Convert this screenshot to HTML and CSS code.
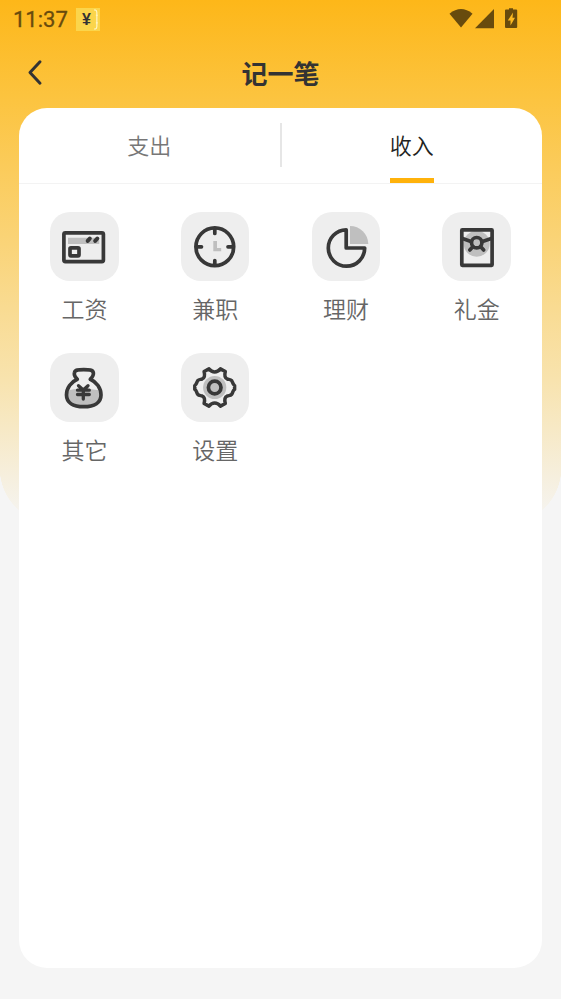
FILE: index.html
```html
<!DOCTYPE html>
<html lang="zh-CN">
<head>
<meta charset="utf-8">
<title>记一笔</title>
<link rel="stylesheet" href="styles.css">
</head>
<body>
<div class="screen">
  <div class="status">
    <span class="time">11:37</span>
    <span class="badge"><span class="yen">¥</span><svg width="6" height="23" viewBox="0 0 6 23"><path d="M0 1.500H1.500Q3 2 3 4V19Q3 21 1.500 21.500H0M2 7H4M2 15H4" fill="none" stroke="#fff6c8" stroke-width="1.200"/></svg></span>
    <svg class="signals" width="76" height="24" viewBox="0 1 76 24" fill="#684b0d">
      <path d="M1 9Q12.500 -1 24 9L12.500 24Z" transform="translate(-.5 -.7) scale(1 .93)"/>
      <path d="M45 3V22.300H26Z"/>
      <path fill-rule="evenodd" d="M60 2.300h4V3.600h3.200q1 0 1 1V21q0 1-1 1H57q-1 0-1-1V4.600q0-1 1-1h3ZM64 6.500L58.800 14.500H61.500V19.500L66 11.700H63.500Z"/>
    </svg>
  </div>
  <header class="header">
    <svg class="back" width="16" height="28" viewBox="0 0 16 28"><path d="M13 2.800L3 13.500L13 24.200" fill="none" stroke="#333" stroke-width="3" stroke-linecap="round" stroke-linejoin="round"/></svg>
    <h1>记一笔</h1>
  </header>
  <main class="card">
    <nav class="tabs">
      <div class="tab"><span>支出</span></div>
      <div class="divider"></div>
      <div class="tab active"><span>收入</span></div>
    </nav>
    <div class="grid">
      <div class="item">
        <svg class="tile" viewBox="0 0 68.5 69">
          <path class="shade" d="M18 25.700H49.300V32H18Z"/>
          <rect x="13.900" y="20.800" width="39.500" height="28.800" rx="1.500"/>
          <rect x="20" y="35.800" width="9" height="8" rx="1"/>
          <path d="M37.700 28.900L39.800 26.500M45.200 28.900L47.300 26.500" stroke-width="4"/>
        </svg>
        <span>工资</span>
      </div>
      <div class="item">
        <svg class="tile" viewBox="0 0 68.5 69">
          <path class="shade" d="M32.300 29H36V36H40.200V39.300H32.300Z"/>
          <circle cx="33.800" cy="34.800" r="18.900"/>
          <path d="M33.800 16.500V21.500M33.800 48.500V53M15.500 34.800H20.500M47 34.800H52"/>
        </svg>
        <span>兼职</span>
      </div>
      <div class="item">
        <svg class="tile" viewBox="0 0 68.5 69">
          <path class="shade" d="M38 14A18.300 18.300 0 0 1 56.300 32H38Z"/>
          <path d="M34.200 17.800A18.200 18.200 0 1 0 52.700 36H34.200Z"/>
        </svg>
        <span>理财</span>
      </div>
      <div class="item">
        <svg class="tile" viewBox="0 0 68.5 69">
          <circle class="shade" cx="34.700" cy="31.700" r="13"/>
          <rect x="19.800" y="17.800" width="30.300" height="35.500" rx=".5"/>
          <circle cx="34.700" cy="30.700" r="5.200"/>
          <path d="M20.500 26.500L29 29.500M49.300 26.500L40.500 29.500M31 34.500L27.800 38M38.500 34.500L41.700 38"/>
        </svg>
        <span>礼金</span>
      </div>
      <div class="item">
        <svg class="tile" viewBox="0 0 68.5 69">
          <path class="shade" d="M17 38Q23 35.500 33.500 35.700T51 38V43Q50 54 33.700 54T16.500 43Z"/>
          <path d="M27.300 26.300C25.500 24.500 23.500 22.500 24.500 19.500C25 17 28 16.700 33.700 16.700S42.700 17 43.300 19.500C44 22.500 42 24.500 40.300 26.300C46.500 29 51 35 51 42C51 49.500 44.500 53.700 33.700 53.700S16.500 49.500 16.500 42C16.500 35 21 29 27.300 26.300Z"/>
          <path d="M28.500 32.700L33.300 37L38 32.700M27.500 37.200H39.300M27.500 41.500H39.300M33.300 37V46" stroke-width="3.300"/>
        </svg>
        <span>其它</span>
      </div>
      <div class="item">
        <svg class="tile" viewBox="0 0 68.5 69">
          <circle class="shade" cx="33.700" cy="34.500" r="11.600"/>
          <circle cx="33.700" cy="34.500" r="6.300"/>
          <path d="M33.700 19C36.500 19 38 17.600 39.400 15.900L44.300 18.500C43.300 22.500 43.800 25 46.200 26C47.800 26.600 49.500 26.200 50.700 27.600C51.700 29.100 51.700 31.300 53.600 32.600V36.400C51.700 37.700 51.700 39.900 50.700 41.400C49.500 42.800 47.800 42.400 46.200 43C43.800 44 43.300 46.500 44.300 50.500L39.400 53.100C38 51.400 36.500 50 33.700 50C30.900 50 29.400 51.400 28 53.100L23.100 50.500C24.100 46.500 23.600 44 21.200 43C19.600 42.400 17.900 42.800 16.700 41.400C15.700 39.900 15.700 37.700 13.800 36.400V32.600C15.700 31.300 15.700 29.100 16.700 27.600C17.900 26.200 19.600 26.600 21.200 26C23.600 25 24.100 22.500 23.100 18.500L28 15.900C29.400 17.600 30.900 19 33.700 19Z" stroke-width="3.500"/>
        </svg>
        <span>设置</span>
      </div>
    </div>
  </main>
</div>
</body>
</html>
```
FILE: styles.css
```css
* { box-sizing: border-box; }
body {
  margin: 0;
  background: #f5f5f5;
  font-family: "Noto Sans CJK SC", sans-serif;
}
.screen {
  height: 999px;
  background: radial-gradient(circle at 56px 0, transparent 56px, #f5f5f5 56.500px) 0 468px / 56px 57px no-repeat,
    radial-gradient(circle at 0 0, transparent 56px, #f5f5f5 56.500px) 505px 468px / 56px 57px no-repeat,
    linear-gradient(#fdb719, #fcc440 100px, #f8e3ae 380px, #f5f5f5) 0 0 / 100% 525px no-repeat;
}
.status {
  display: flex;
  align-items: center;
  height: 38px;
  padding-left: 13px;
}
.time {
  width: 63px;
  font: 400 22px/38px Roboto, sans-serif;
  padding-top: 1px;
  color: #684b0d;
  -webkit-text-stroke: .3px #684b0d;
}
.badge {
  display: flex;
  align-items: center;
  width: 24px;
  height: 23px;
  padding-left: 6px;
  background: #fbd54b;
}
.yen {
  width: 13px;
  font: 700 16px/21px "Liberation Sans", sans-serif;
  color: #333;
}
.signals { margin-left: 349px; }
.header {
  display: grid;
  grid-template-columns: 50px 1fr 50px;
  align-items: center;
  height: 70px;
}
.back { margin-left: 27px; }
h1 {
  margin: 0;
  text-align: center;
  font-size: 26px;
  line-height: 38px;
  font-weight: 700;
  color: #333;
}
.card {
  width: 523px;
  height: 860px;
  margin: 0 auto;
  background: #fff;
  border-radius: 28px;
}
.tabs {
  display: flex;
  height: 76px;
  border-bottom: 1px solid #f3f3f3;
}
.tab {
  display: flex;
  justify-content: center;
  flex: 1;
  height: 75px;
  font-size: 22px;
  line-height: 73px;
  font-weight: 350;
  color: #777;
}
.tab.active { color: #222; }
.active span { border-bottom: 5px solid #ffb20b; }
.divider {
  width: 2px;
  height: 44px;
  margin-top: 15px;
  background: #e6e6e6;
}
.grid {
  display: grid;
  grid-template-columns: repeat(4, 1fr);
  grid-auto-rows: 141px;
  padding-top: 28px;
}
.item {
  display: flex;
  flex-direction: column;
  align-items: center;
  font-size: 23px;
  line-height: 34px;
  font-weight: 350;
  color: #666;
}
.item span { margin-top: 10px; }
.tile {
  width: 68.500px;
  height: 69px;
  border-radius: 20px;
  background: #eee;
  fill: none;
  stroke: #383838;
  stroke-width: 3.700;
  stroke-linecap: round;
  stroke-linejoin: round;
}
.tile .shade {
  fill: #bfbfbf;
  stroke: none;
}
```
